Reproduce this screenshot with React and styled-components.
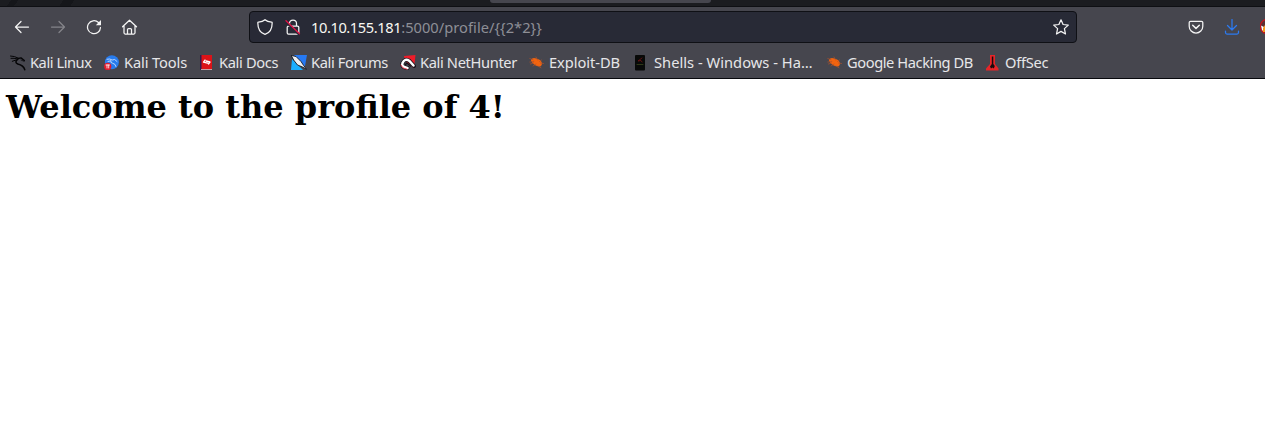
import React from 'react';
import styled, { createGlobalStyle } from 'styled-components';

const GlobalStyle = createGlobalStyle`
  * { box-sizing: border-box; }
  body { margin: 0; background: #fff; overflow: hidden; }
`;

const Browser = styled.div`
  display: flex;
  flex-direction: column;
  width: 1265px;
  height: 421px;
  overflow: hidden;
  background: #fff;
`;

const TabStrip = styled.div`
  flex: none;
  height: 7px;
  padding-left: 490px;
  background: linear-gradient(125deg, #1b1c20 0 9px, #15161a 9px 15px, #1b1c20 15px 52px, #15161a 52px 61px, #1b1c20 61px);
  border-bottom: 1px solid #0e0f13;
`;

const ActiveTab = styled.div`
  width: 221px;
  height: 3px;
  border-radius: 0 0 3px 3px;
  background: #46464e;
`;

const NavBar = styled.div`
  flex: none;
  display: flex;
  align-items: center;
  height: 40px;
  padding-left: 12px;
  background: #46464e;
`;

const NavButton = styled.div`
  flex: none;
  display: flex;
  justify-content: center;
  width: 20px;
  margin-right: 16px;
  color: ${(p) => p.$color || '#f4f4f4'};
`;

const UrlBar = styled.div`
  flex: none;
  display: flex;
  align-items: center;
  width: 828px;
  height: 32px;
  margin: 0 109px 0 93px;
  padding: 0 7px;
  border: 1px solid #0f1015;
  border-radius: 4px;
  background: #282a36;
  color: #f4f4f4;
`;

const UrlIcon = styled.div`
  flex: none;
  display: flex;
  width: 16px;
  margin-right: ${(p) => p.$gap || 0}px;
`;

const Address = styled.div`
  flex: 1;
  font: 14.67px/20px 'Noto Sans', sans-serif;
  letter-spacing: -0.42px;
  white-space: nowrap;
  color: #f8f8f2;
`;

const Path = styled.span`
  letter-spacing: 0.03px;
  color: #8e8f96;
`;

const BookmarkBar = styled.div`
  flex: none;
  display: flex;
  align-items: center;
  height: 32px;
  padding: 0 0 1px 10px;
  background: #46464e;
  border-bottom: 1px solid #08090d;
`;

const Bookmark = styled.div`
  flex: none;
  display: flex;
  align-items: center;
  gap: ${(p) => p.$gap || 4}px;
  width: ${(p) => p.$width}px;
  font: 14.67px/20px 'Noto Sans', sans-serif;
  letter-spacing: ${(p) => p.$spacing || 0}px;
  white-space: nowrap;
  color: #e6e6e9;
`;

const BookmarkIcon = styled.span`
  flex: none;
  display: flex;
  padding-top: 2px;
`;

const Page = styled.main`
  flex: 1;
  padding: 9px 6px;
`;

const Heading = styled.h1`
  margin: 0;
  font: bold 32px/38px 'DejaVu Serif', serif;
  color: #000;
`;

const Svg = styled.svg`
  flex: none;
  display: block;
  width: 16px;
  height: 16px;
  fill: none;
  stroke: ${(p) => (p.$solid ? 'none' : 'currentColor')};
  stroke-width: 1.25;
  stroke-linecap: round;
  stroke-linejoin: round;
`;

const Back = () => <Svg viewBox="0 0 16 16"><path d="M14.500 8H1.500M7 2.500 1.500 8 7 13.500" /></Svg>;
const Forward = () => <Svg viewBox="0 0 16 16"><path d="M1.500 8h13M9 2.500 14.500 8 9 13.500" /></Svg>;
const Reload = () => (
  <Svg viewBox="0 0 16 16"><path d="M14.500 8.500A6.500 6.500 0 1 1 12.500 3.500" /><path d="M15 1v5.200H9.800z" fill="currentColor" stroke="none" /></Svg>
);
const Home = () => (
  <Svg viewBox="0 0 16 16"><path d="M.5 7.800 7.500 1.200l7 6.600M2 6.800v7q0 1.200 1.200 1.200h8.600q1.200 0 1.200-1.200v-7M5.500 15v-4.500q0-1 1-1h2q1 0 1 1V15" /></Svg>
);
const Shield = () => (
  <Svg viewBox="0 0 16 16"><path d="M8 .7C6.400 2.300 3.700 3 1.500 3c-.5 0-.7.300-.7.700C.8 9.500 3.500 14 8 15.400c4.500-1.400 7.200-5.900 7.200-11.700 0-.400-.2-.7-.7-.7C12.300 3 9.600 2.300 8 .7z" /></Svg>
);
const Lock = () => (
  <Svg viewBox="0 0 16 16"><path d="M4.500 7V4.500a3.500 3.500 0 0 1 7 0V7M3.500 7h9q1.300 0 1.300 1.300v5.400q0 1.300-1.300 1.300h-9q-1.300 0-1.300-1.300V8.300Q2.200 7 3.500 7z" /><path d="M1.300 3.300 13.500 15" stroke="#282a36" strokeWidth="2" /><path d="M1 1.700 14.500 14.800" stroke="#e11346" strokeWidth="1.300" /></Svg>
);
const Star = () => (
  <Svg viewBox="0 0 16 16"><path d="m8 .8 2.100 4.700 5.200.600-3.900 3.500 1.100 5.400L8 12.400 3.500 15l1.100-5.400L.7 6.100l5.200-.600z" /></Svg>
);
const Pocket = () => (
  <Svg viewBox="0 0 16 16"><path d="M2.500 2.300h11q1.300 0 1.300 1.300v3.600a6.800 6.800 0 0 1-13.600 0V3.600q0-1.300 1.300-1.300z" /><path d="M4.700 6.300 8 9.400l3.300-3.100" strokeWidth="1.500" /></Svg>
);
const Download = () => (
  <Svg viewBox="0 0 16 16"><path d="M8 .5v10M3.500 6.500 8 11l4.500-4.500M1.500 12v1.500q0 1.500 1.500 1.500h10q1.500 0 1.500-1.500V12" /></Svg>
);
const Extension = () => (
  <Svg viewBox="0 0 16 16"><circle cx="7.500" cy="7.500" r="7.200" fill="#5b3035" stroke="#c8141c" /><path d="M1 6.500 4 8v5l-2-2z" fill="#fff" stroke="none" /><path d="m3 9 2-3 3 2v5H3z" fill="#f6981c" stroke="none" /></Svg>
);

const DragonShape = () => (
  <g fill="none" stroke="currentColor" strokeWidth="1">
    <path d="M.5 1q4 0 7.500 2M1 3.300q3-.3 6 .5M2.300 6.300 6 5" />
    <path d="m8 3.500 3-.6 3.300 2.600" strokeWidth="1.400" />
    <path d="M7.800 4.200Q4 7.300 7.800 9c3 .7 5.800 1.500 7 5.700" strokeWidth="1.500" />
    <path d="m11 5 3 1.300" strokeWidth=".7" />
  </g>
);
const KaliLinux = () => <Svg $solid viewBox="0 0 16 16"><g color="#050507"><DragonShape /></g></Svg>;
const KaliTools = () => (
  <Svg $solid viewBox="0 0 16 16"><circle cx="7.900" cy="7.200" r="7" fill="#277bed" /><path d="M3 4.200q3-.8 5.200.8l2.500-.5 2.300 2M4 6.500l3-.8q-1 2 1.500 2.500 3 .5 3.500 3.300" stroke="#c9dfff" strokeWidth=".9" /><circle cx="3.700" cy="11.400" r="3.600" fill="#e01b2e" /><path d="M2 10h3.500M3 10v3M4.700 10v3" stroke="#fff" strokeWidth=".8" /></Svg>
);
const KaliDocs = () => (
  <Svg $solid viewBox="0 0 16 16"><path d="M1 0h12v15H1z" fill="#dc1318" /><path d="M1 0h1.500v15H1z" fill="#371a4b" /><path d="M2 14h11v1H2z" fill="#c5a0a4" /><path d="M6 5 4.500 7.200 8.500 8.200M9.500 9l1.500-2-4-1" stroke="#fff" strokeWidth="1.300" /></Svg>
);
const KaliForums = () => (
  <Svg $solid viewBox="0 0 16 16"><path d="M3 0h13l-2 11H8z" fill="#2679f3" /><path d="m1 4 11 11H0z" fill="#1bafff" /><path d="M.5.500 5 1.500l5 5 2.500 3.800 3 4-4.500-2.500L6.500 10 3 5.500z" fill="#eef0f3" stroke="#161a22" strokeWidth=".9" /></Svg>
);
const NetHunter = () => (
  <Svg $solid viewBox="0 0 16 16"><path d="M4 1 15.500 0 14 13 5 6z" fill="#ef1c29" /><path d="M7.500 13Q1 12 2.500 8 5 2.800 9.500 6L14 11" stroke="#151219" strokeWidth="4" /><path d="M7.500 13Q1 12 2.500 8 5 2.800 9.500 6L13.500 10.500" stroke="#fff" strokeWidth="2.500" /><path d="M.7 10Q2 13.800 7 14.300" stroke="#ef3447" strokeWidth=".9" /><path d="M5.500 9.500 7 8l3.500 3" stroke="#151219" strokeWidth="1.200" /></Svg>
);
const Bug = () => (
  <Svg $solid viewBox="0 0 16 16"><path d="M1.800 5Q3.500 2 7.300 3.500q4.500 1 5.500 4 .7 2.500-1.500 4-5.300-.2-8-3.700z" fill="#f2640f" /><path d="M.8 3.500 4 4.700M.8 7l4-.5M4 11l3-2M9 11l3 1.800M7 2l1.500 3M12.500 5l-2 1.500M14.500 8.500l-3-.5M1.500 9l3-1" stroke="#ad512c" strokeWidth=".7" /></Svg>
);
const Book = () => (
  <Svg $solid viewBox="0 0 16 16"><rect x="2" width="10" height="15.500" rx="1" fill="#080908" /><path d="M9 3 5 6l3-.5L9 7" stroke="#701414" strokeWidth=".8" /><path d="M4 9.500h6" stroke="#39451b" strokeWidth=".8" /></Svg>
);
const OffSec = () => (
  <Svg $solid viewBox="0 0 16 16"><path d="M5 0h5v9l3.500 4.500v2H1v-2L5 9z" fill="#e52528" /><path d="M6.800 1.500h1.500v7.500l1.500 2-1 2.500-1.300-1-1.500 1-1-2 1.800-2.500z" fill="#190b0d" /></Svg>
);

const bookmarks = [
  { label: 'Kali Linux', icon: <KaliLinux />, width: 94, spacing: -0.45 },
  { label: 'Kali Tools', icon: <KaliTools />, width: 95, spacing: -0.12 },
  { label: 'Kali Docs', icon: <KaliDocs />, width: 92, spacing: -0.35 },
  { label: 'Kali Forums', icon: <KaliForums />, width: 109, spacing: -0.36 },
  { label: 'Kali NetHunter', icon: <NetHunter />, width: 129, spacing: -0.36 },
  { label: 'Exploit-DB', icon: <Bug />, width: 104, spacing: -0.05 },
  { label: 'Shells - Windows - Ha…', icon: <Book />, width: 194, gap: 5, spacing: 0.03 },
  { label: 'Google Hacking DB', icon: <Bug />, width: 158, spacing: -0.42 },
  { label: 'OffSec', icon: <OffSec />, width: 70, spacing: -0.25 },
];

export default function App() {
  return (
    <Browser>
      <GlobalStyle />
      <TabStrip><ActiveTab /></TabStrip>
      <NavBar>
        <NavButton><Back /></NavButton>
        <NavButton $color="#84848a"><Forward /></NavButton>
        <NavButton><Reload /></NavButton>
        <NavButton><Home /></NavButton>
        <UrlBar>
          <UrlIcon $gap={12}><Shield /></UrlIcon>
          <UrlIcon $gap={10}><Lock /></UrlIcon>
          <Address>10.10.155.181<Path>:5000/profile/&#123;&#123;2*2&#125;&#125;</Path></Address>
          <UrlIcon><Star /></UrlIcon>
        </UrlBar>
        <NavButton><Pocket /></NavButton>
        <NavButton $color="#2b7af0"><Download /></NavButton>
        <NavButton><Extension /></NavButton>
      </NavBar>
      <BookmarkBar>
        {bookmarks.map((b) => (
          <Bookmark key={b.label} $width={b.width} $gap={b.gap} $spacing={b.spacing}>
            <BookmarkIcon>{b.icon}</BookmarkIcon>
            <span>{b.label}</span>
          </Bookmark>
        ))}
      </BookmarkBar>
      <Page><Heading>Welcome to the profile of 4!</Heading></Page>
    </Browser>
  );
}
